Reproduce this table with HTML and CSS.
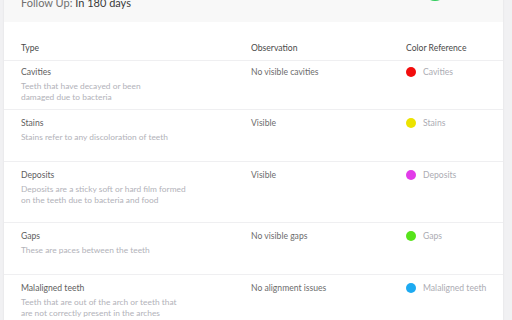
FILE: index.html
```html
<!DOCTYPE html>
<html lang="en">
<head>
  <meta charset="UTF-8">
  <meta name="viewport" content="width=device-width, initial-scale=1.0">
  <title>Dental Report</title>
  <link rel="stylesheet" href="styles.css">
</head>
<body>
  <div class="report">
    <div class="summary">
      <div class="follow-up">Follow Up: <span>In 180 days</span></div>
      <div class="score-ring"></div>
    </div>

    <div class="table">
      <div class="row head">
        <div>Type</div>
        <div>Observation</div>
        <div>Color Reference</div>
      </div>

      <div class="row compact">
        <div>
          <div class="title">Cavities</div>
          <div class="desc">Teeth that have decayed or been<br>damaged due to bacteria</div>
        </div>
        <div class="obs">No visible cavities</div>
        <div class="ref"><span class="dot red"></span>Cavities</div>
      </div>

      <div class="row">
        <div>
          <div class="title">Stains</div>
          <div class="desc">Stains refer to any discoloration of teeth</div>
        </div>
        <div class="obs">Visible</div>
        <div class="ref"><span class="dot yellow"></span>Stains</div>
      </div>

      <div class="row tall">
        <div>
          <div class="title">Deposits</div>
          <div class="desc">Deposits are a sticky soft or hard film formed<br>on the teeth due to bacteria and food</div>
        </div>
        <div class="obs">Visible</div>
        <div class="ref"><span class="dot magenta"></span>Deposits</div>
      </div>

      <div class="row">
        <div>
          <div class="title">Gaps</div>
          <div class="desc">These are paces between the teeth</div>
        </div>
        <div class="obs">No visible gaps</div>
        <div class="ref"><span class="dot green"></span>Gaps</div>
      </div>

      <div class="row">
        <div>
          <div class="title">Malaligned teeth</div>
          <div class="desc">Teeth that are out of the arch or teeth that<br>are not correctly present in the arches</div>
        </div>
        <div class="obs">No alignment issues</div>
        <div class="ref"><span class="dot blue"></span>Malaligned teeth</div>
      </div>
    </div>
  </div>
</body>
</html>
```

FILE: styles.css
```css
body {
  margin: 0;
  height: 320px;
  overflow: hidden;
  background-color: #f1f1f3;
  font-family: Lato, "Open Sans", sans-serif;
}

.report {
  margin-left: 4px;
  width: 499px;
  min-height: 320px;
  background-color: #fff;
  box-shadow: 0 0 2px rgba(0, 0, 0, 0.08);
}

.summary {
  display: flex;
  justify-content: space-between;
  align-items: flex-end;
  margin-top: -40px;
  height: 62px;
  padding: 0 56px 0 17px;
  background-color: #f8f8f8;
}

.follow-up {
  font-size: 11px;
  line-height: 14px;
  color: #707070;
  margin-bottom: 12px;
}

.follow-up span {
  color: #3a3a3a;
}

.score-ring {
  width: 18px;
  height: 18px;
  border: 3px solid #2ecc5a;
  border-radius: 50%;
  margin-bottom: 21px;
}

.row {
  display: grid;
  grid-template-columns: 230px 155px 1fr;
  min-height: 52px;
  padding: 7px 17px 0;
  border-bottom: 1px solid #efeff1;
  box-sizing: border-box;
  font-size: 8.6px;
  line-height: 13px;
}

.row.compact {
  min-height: 49px;
  padding-top: 5px;
}

.row.tall {
  min-height: 61px;
}

.row.head {
  min-height: 0;
  padding: 20px 17px 5px;
  color: #4a4a4a;
}

.title {
  color: #606060;
}

.desc {
  margin-top: 2px;
  font-size: 8.4px;
  line-height: 11px;
  color: #b2b2b9;
}

.obs {
  color: #6c6c6c;
}

.ref {
  display: flex;
  align-items: flex-start;
  white-space: nowrap;
  color: #acacb3;
}

.dot {
  width: 10px;
  height: 10px;
  margin: 1px 7px 0 0;
  border-radius: 50%;
}

.red { background-color: #f20d0d; }
.yellow { background-color: #ece300; }
.magenta { background-color: #e23ce9; }
.green { background-color: #57e31b; }
.blue { background-color: #1daaf1; }
```
